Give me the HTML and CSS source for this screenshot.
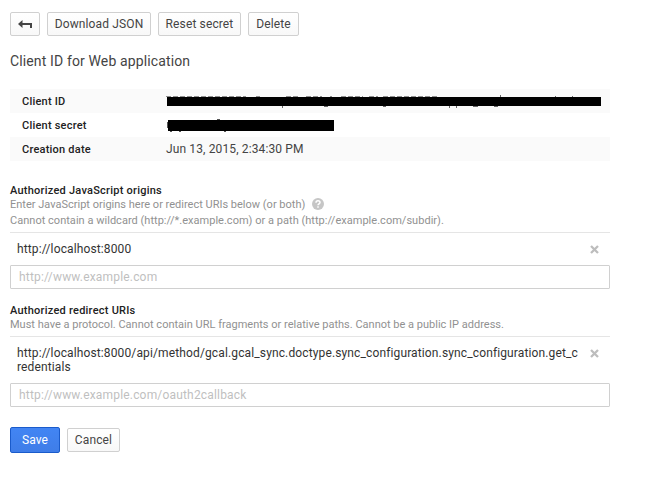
FILE: index.html
```html
<!DOCTYPE html>
<html lang="en">
<head>
<meta charset="utf-8">
<title>Client ID for Web application</title>
<link rel="stylesheet" href="styles.css">
</head>
<body>
<main class="page">
  <div class="toolbar">
    <button class="btn back" aria-label="Back"><svg width="14" height="10" viewBox="0 0 14 10"><path d="M0 5 4.500 1v3H14v5h-2V6H4.500v3z" fill="#444"/></svg></button>
    <button class="btn download">Download JSON</button>
    <button class="btn reset">Reset secret</button>
    <button class="btn delete">Delete</button>
  </div>
  <h1 class="title">Client ID for Web application</h1>
  <dl class="details">
    <div class="row shaded"><dt>Client ID</dt><dd><svg class="redacted" width="436" height="24" viewBox="0 0 436 24"><path d="M0 7.500h80M90 7.500h4M120 7.500h12M140 7.500h16M164 7.500h2M175 7.500h22M203 7.500h9M217 7.500h54" fill="none" stroke="#555" stroke-opacity=".65" stroke-dasharray="5 2"/><path d="M116.500 17v2M158 17.500h4M217 17.500h3M283.500 17v2M290.500 17v2M307 17.500h5M328 17.500h4M334.500 6v2M389 7.500h1M406 7.500h1" fill="none" stroke="#666"/><path d="M1 8h434v9H1z" fill="#000"/></svg></dd></div>
    <div class="row"><dt>Client secret</dt><dd><svg class="redacted" width="436" height="24" viewBox="0 0 436 24"><path d="M1.500 9v6M4 18.500h2M13 18.500h2M51 6.500h3M58 18.500h2" fill="none" stroke="#555"/><path d="M2 7h166v11H2z" fill="#000"/></svg></dd></div>
    <div class="row shaded"><dt>Creation date</dt><dd>Jun 13, 2015, 2:34:30 PM</dd></div>
  </dl>
  <section class="group origins">
    <h2>Authorized JavaScript origins</h2>
    <p>Enter JavaScript origins here or redirect URIs below (or both)<svg class="help" width="12" height="12" viewBox="0 0 12 12"><circle cx="6" cy="6" r="6" fill="#c6c6c6"/><path d="M4 4.700C4 2.200 8 2.200 8 4.500 8 5.800 6 5.900 6 7.300M6 8.300v1.500" fill="none" stroke="#fff" stroke-width="1.500"/></svg></p>
    <p class="second">Cannot contain a wildcard (http://*.example.com) or a path (http://example.com/subdir).</p>
    <div class="entry"><span>http://localhost:8000</span><svg class="remove" width="9" height="9" viewBox="0 0 9 9"><path d="m1 1 7 7m0-7L1 8" stroke="#bdbdbd" stroke-width="2.300"/></svg></div>
    <input type="text" placeholder="http://www.example.com">
  </section>
  <section class="group redirects">
    <h2>Authorized redirect URIs</h2>
    <p>Must have a protocol. Cannot contain URL fragments or relative paths. Cannot be a public IP address.</p>
    <div class="entry"><span>http://localhost:8000/api/method/gcal.gcal_sync.doctype.sync_configuration.sync_configuration.get_credentials</span><svg class="remove" width="9" height="9" viewBox="0 0 9 9"><path d="m1 1 7 7m0-7L1 8" stroke="#bdbdbd" stroke-width="2.300"/></svg></div>
    <input type="text" placeholder="http://www.example.com/oauth2callback">
  </section>
  <div class="actions">
    <button class="btn save">Save</button>
    <button class="btn cancel">Cancel</button>
  </div>
</main>
</body>
</html>
```
FILE: styles.css
```css
* { box-sizing: border-box; }
body { margin: 0; background: #fff; color: #333; font: 12px/14px Roboto, "Liberation Sans", sans-serif; letter-spacing: .13px; }
h1, h2, p, dl, dd { margin: 0; }
svg { flex: none; }
.page { width: 610px; padding: 12px 0 0 10px; }
.toolbar { display: flex; gap: 7px; }
.btn { display: flex; align-items: center; justify-content: center; height: 24px; padding: 0; border: 1px solid #d0d0d0; border-radius: 2px; background: linear-gradient(#fff, #f8f8f8); color: #444; font: 12px/14px Roboto, "Liberation Sans", sans-serif; letter-spacing: .13px; white-space: nowrap; }
.back { width: 30px; }
.download { width: 104px; }
.reset { width: 83px; }
.delete { width: 51px; }
.title { margin-top: 15px; font-size: 14px; line-height: 20px; font-weight: 400; color: #444; }
.details { margin-top: 18px; }
.row { display: flex; height: 24px; padding-left: 12px; line-height: 25px; }
.shaded { background: #fafafa; }
dt { width: 144px; font-size: 11px; font-weight: 500; letter-spacing: .22px; line-height: 26px; color: #222; }
dd { color: #444; }
.redacted { display: block; }
.group h2 { font-size: 11px; line-height: 14px; font-weight: 500; letter-spacing: .24px; color: #222; }
.group p { display: flex; align-items: center; font-size: 11px; line-height: 14px; letter-spacing: .005px; color: #919191; }
.origins { margin-top: 23px; }
.redirects { margin-top: 15px; }
.group .second { margin-top: 2px; letter-spacing: .025px; }
.help { margin: 0 0 2px 7px; }
.entry { display: flex; align-items: flex-start; justify-content: space-between; margin-top: 4px; padding: 9px 11px 9px 7px; border-top: 1px solid #e5e5e5; }
.entry span { width: 563px; letter-spacing: .13px; word-break: break-all; color: #333; }
.remove { margin-top: 3px; }
input { display: block; width: 600px; height: 24px; padding: 0 8px; border: 1px solid #d0d0d0; border-radius: 1px; font: 12px/14px Roboto, "Liberation Sans", sans-serif; letter-spacing: .18px; }
input::placeholder { color: #bfbfbf; opacity: 1; }
.actions { display: flex; align-items: center; gap: 7px; margin-top: 20px; }
.save { width: 50px; height: 26px; border-color: #1a5bcb; background: linear-gradient(#4285f4, #3f7de8); color: #fff; }
.cancel { width: 53px; }
```
